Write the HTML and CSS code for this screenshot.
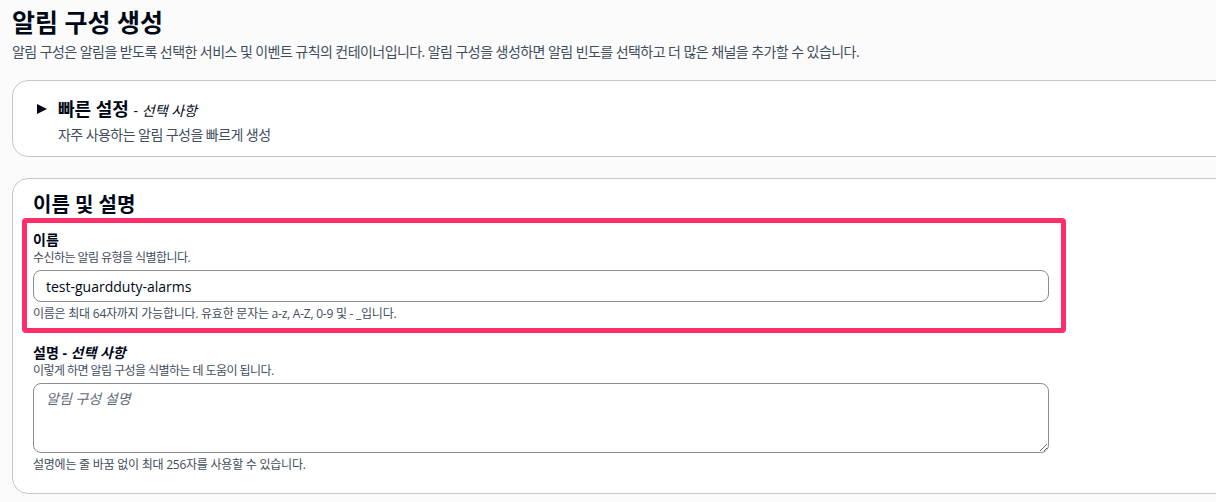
FILE: index.html
```html
<!DOCTYPE html>
<html lang="ko">
  <head>
    <meta charset="UTF-8" />
    <meta name="viewport" content="width=device-width, initial-scale=1.0" />
    <title>알림 구성 생성</title>
    <link rel="stylesheet" href="styles.css">
  </head>
  <body>
    <div class="page">
      <!-- Header -->
      <header class="page-header">
        <h1>알림 구성 생성</h1>
        <p class="page-desc">알림 구성은 알림을 받도록 선택한 서비스 및 이벤트 규칙의 컨테이너입니다. 알림 구성을 생성하면 알림 빈도를 선택하고 더 많은 채널을 추가할 수 있습니다.</p>
      </header>

      <!-- Quick setup -->
      <section class="card expand">
        <div class="expand-head">
          <span class="caret"></span>
          <div>
            <h2 class="expand-title">빠른 설정 <span class="optional">- <i>선택 사항</i></span></h2>
            <p class="expand-desc">자주 사용하는 알림 구성을 빠르게 생성</p>
          </div>
        </div>
      </section>

      <!-- Name and description -->
      <section class="card form">
        <h2 class="card-title">이름 및 설명</h2>

        <div class="highlight">
          <div class="field">
            <label class="field-label" for="name">이름</label>
            <p class="field-desc">수신하는 알림 유형을 식별합니다.</p>
            <input class="text-input" type="text" id="name" value="test-guardduty-alarms" />
            <p class="field-hint">이름은 최대 64자까지 가능합니다. 유효한 문자는 a-z, A-Z, 0-9 및 - _입니다.</p>
          </div>
        </div>

        <div class="field field-plain">
          <label class="field-label" for="desc">설명 - <i>선택 사항</i></label>
          <p class="field-desc">이렇게 하면 알림 구성을 식별하는 데 도움이 됩니다.</p>
          <textarea class="text-area" id="desc" placeholder="알림 구성 설명"></textarea>
          <p class="field-hint">설명에는 줄 바꿈 없이 최대 256자를 사용할 수 있습니다.</p>
        </div>
      </section>
    </div>
  </body>
</html>
```

FILE: styles.css
```css
body {
  margin: 0;
  background: #fbfbfb;
  color: #000716;
  font-family: "Open Sans", "Noto Sans CJK KR", sans-serif;
  letter-spacing: -0.035em;
  overflow: hidden;
}
.page {
  padding: 6px 0 0 12px;
}
h1,
h2,
p {
  margin: 0;
}
.page-header h1 {
  font-size: 25px;
  line-height: 32px;
  font-weight: 700;
  letter-spacing: 0;
}
.page-desc {
  margin-top: 4px;
  font-size: 14px;
  line-height: 20px;
  color: #414d5c;
}
.card {
  background: #fff;
  border: 1px solid #c6c6cd;
  border-radius: 16px;
  margin-right: -120px;
}
.expand {
  margin-top: 18px;
  padding: 16px 24px 11px 24px;
}
.expand-head {
  display: flex;
  align-items: flex-start;
  gap: 11px;
}
.caret {
  width: 0;
  height: 0;
  margin-top: 7px;
  border-top: 5.5px solid transparent;
  border-bottom: 5.5px solid transparent;
  border-left: 10px solid #000716;
}
.expand-title {
  font-size: 18px;
  line-height: 24px;
  font-weight: 700;
  letter-spacing: 0;
}
.optional {
  font-size: 14px;
  font-weight: 400;
}
.expand-desc {
  margin-top: 2px;
  font-size: 14px;
  line-height: 20px;
  color: #414d5c;
}
.form {
  margin-top: 21px;
  padding: 14px 20px 14px 20px;
}
.card-title {
  font-size: 20px;
  line-height: 24px;
  font-weight: 700;
  letter-spacing: 0;
}
.highlight {
  width: 1028px;
  margin: 1px 0 0 -11px;
  padding: 7px 0 0 6px;
  border: 5px solid #ff2e6a;
  border-radius: 4px;
}
.field {
  width: 1016px;
  padding-bottom: 6px;
}
.field-plain {
  margin-top: 10px;
}
.field-label {
  display: block;
  font-size: 14px;
  line-height: 20px;
  font-weight: 700;
  letter-spacing: 0;
}
.field-desc,
.field-hint {
  font-size: 12px;
  line-height: 16px;
  color: #414d5c;
}
.field-hint {
  margin-top: 4px;
  letter-spacing: -0.02em;
}
.text-input,
.text-area {
  display: block;
  box-sizing: border-box;
  width: 1016px;
  margin-top: 4px;
  border: 1px solid #8c8c94;
  border-radius: 8px;
  background: #fff;
  font-family: "Open Sans", "Noto Sans CJK KR", sans-serif;
  font-size: 14px;
  color: #000716;
}
.text-input {
  height: 32px;
  padding: 4px 12px;
  letter-spacing: 0;
}
.text-area {
  height: 70px;
  padding: 4px 12px;
  resize: vertical;
}
.text-area::placeholder {
  color: #5f6b7a;
  font-style: italic;
}
```
